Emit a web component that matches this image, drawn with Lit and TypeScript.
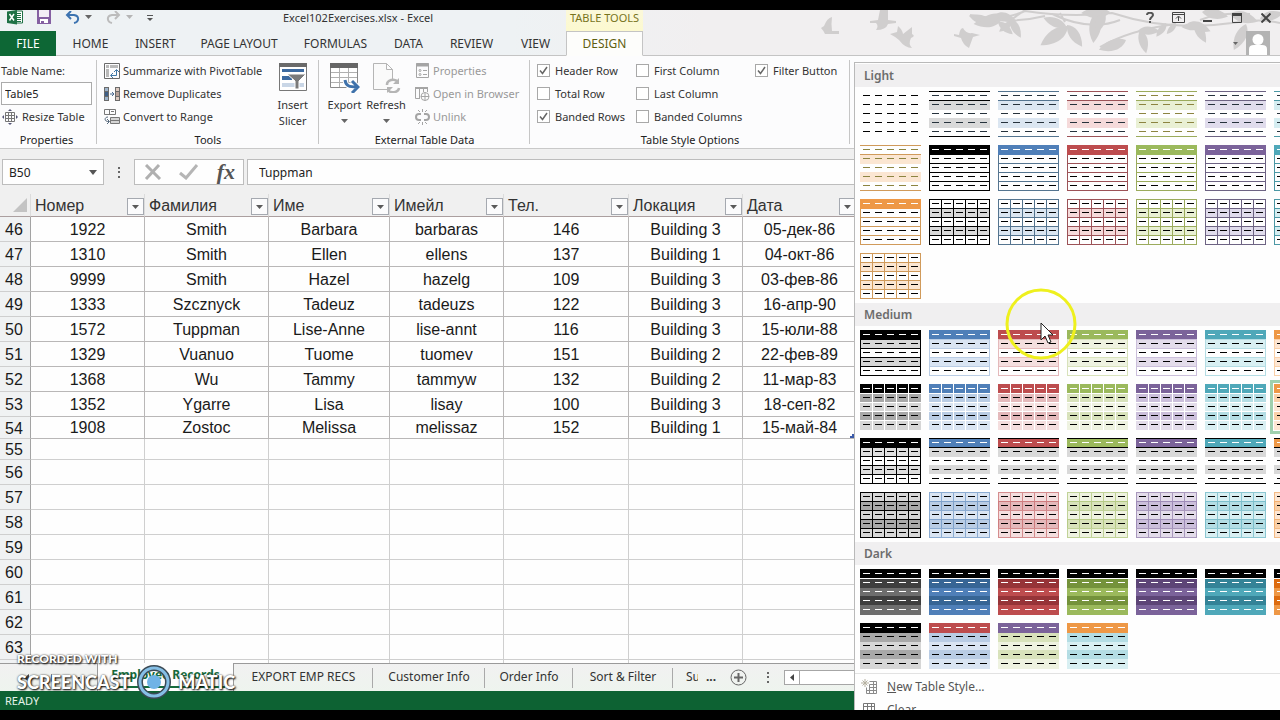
import { LitElement, html, svg, css, nothing } from "lit";
import { customElement, property } from "lit/decorators.js";
import { classMap } from "lit/directives/class-map.js";

type Kind = "none" | "lines" | "boxed" | "grid" | "banded" | "cells" | "ruled" | "tinted" | "dark" | "duo";

interface Tone {
  name: string;
  base: string;
  line: string;
  soft: string;
  tint: string;
  mid: string;
  deep: string;
}

interface Look {
  kind: Kind;
  tone: Tone;
  head?: string;
  selected?: boolean;
}

const TONES: Tone[] = [
  { name: "Black", base: "#000000", line: "#000000", soft: "#d9d9d9", tint: "#d6d6d6", mid: "#a8a8a8", deep: "#3f3f3f" },
  { name: "Blue", base: "#4f7fb8", line: "#54748f", soft: "#dbe6f1", tint: "#d9e4f2", mid: "#b9cce4", deep: "#376595" },
  { name: "Red", base: "#bd4c4e", line: "#9c5257", soft: "#f5dada", tint: "#f4dede", mid: "#e4b9bb", deep: "#963438" },
  { name: "Green", base: "#9bb95c", line: "#9bab5c", soft: "#e9f0d4", tint: "#eef2e0", mid: "#d8e2bb", deep: "#74923b" },
  { name: "Purple", base: "#7b639a", line: "#6d6383", soft: "#e0dcec", tint: "#e3dcea", mid: "#cbbfdb", deep: "#5d4577" },
  { name: "Teal", base: "#4fa8b9", line: "#4c98a5", soft: "#d5edf1", tint: "#d8eff2", mid: "#b4dde4", deep: "#348397" },
  { name: "Orange", base: "#ee9846", line: "#d09a5a", soft: "#fbe6d2", tint: "#fde6d3", mid: "#fad0a8", deep: "#dd6c10" },
];

const run = (kind: Kind): Look[] => TONES.map((tone) => ({ kind, tone }));

const SECTIONS: { title: string; looks: Look[] }[] = [
  {
    title: "Light",
    looks: [{ kind: "none", tone: TONES[0] }, ...run("lines"), ...run("boxed"), ...run("grid")],
  },
  {
    title: "Medium",
    looks: [
      ...run("banded"),
      ...run("cells").map((l, i) => ({ ...l, selected: i === 6 })),
      ...run("ruled"),
      ...run("tinted"),
    ],
  },
  {
    title: "Dark",
    looks: [
      ...run("dark"),
      { kind: "duo", tone: TONES[0], head: "#000000" },
      { kind: "duo", tone: TONES[1], head: TONES[2].base },
      { kind: "duo", tone: TONES[3], head: TONES[4].base },
      { kind: "duo", tone: TONES[5], head: TONES[6].base },
    ],
  },
];

const bar = (y: number, h: number, fill: string) => svg`<rect x="0" y=${y} width="61" height=${h} fill=${fill}></rect>`;
const post = (x: number, y: number, h: number, fill: string) =>
  svg`<rect x=${x} y=${y} width="1" height=${h} fill=${fill}></rect>`;
const ROWS = [0, 9, 18, 27, 36, 45];
const COLS = [0, 12, 24, 36, 48, 60];

function paint(look: Look) {
  const { kind, tone } = look;
  const black = tone.name === "Black";
  switch (kind) {
    case "none":
      return nothing;
    case "lines":
      return [bar(10, 9, tone.soft), bar(27, 10, tone.soft), bar(0, 1, tone.line), bar(9, 1, tone.line), bar(45, 1, tone.line)];
    case "boxed":
      return [
        ...ROWS.slice(1).map((y) => bar(y, 1, tone.line)),
        post(0, 0, 46, tone.line),
        post(60, 0, 46, tone.line),
        bar(0, 10, tone.base),
      ];
    case "grid":
      return [
        bar(9, 9, tone.soft),
        bar(27, 9, tone.soft),
        ...ROWS.map((y) => bar(y, 1, tone.line)),
        ...COLS.map((x) => post(x, 0, 46, tone.line)),
      ];
    case "banded": {
      const edge = black ? "#000000" : tone.mid;
      return [
        bar(9, 9, tone.tint),
        bar(27, 9, tone.tint),
        ...ROWS.map((y) => bar(y, 1, edge)),
        post(0, 0, 46, edge),
        post(60, 0, 46, edge),
        bar(0, 9, tone.base),
      ];
    }
    case "cells":
      return [
        bar(0, 9, tone.base),
        bar(9, 9, tone.mid),
        bar(18, 9, tone.tint),
        bar(27, 9, tone.mid),
        bar(36, 10, tone.tint),
        ...ROWS.slice(1, 5).map((y) => bar(y, 1, "#ffffff")),
        ...COLS.slice(1, 5).map((x) => post(x, 0, 46, "#ffffff")),
      ];
    case "ruled":
      return black
        ? [
            bar(9, 9, "#dedede"),
            bar(27, 9, "#dedede"),
            ...ROWS.map((y) => bar(y, 1, "#000000")),
            ...COLS.map((x) => post(x, 0, 46, "#000000")),
            bar(0, 10, "#000000"),
          ]
        : [
            bar(0, 9, tone.base),
            bar(10, 9, "#d9d9d9"),
            bar(27, 9, "#d9d9d9"),
            bar(0, 1, "#000000"),
            bar(9, 1, "#000000"),
            bar(45, 1, "#000000"),
          ];
    case "tinted": {
      const edge = black ? "#000000" : tone.base;
      const alpha = black ? 1 : 0.55;
      return [
        bar(0, 46, tone.tint),
        bar(9, 9, tone.mid),
        bar(27, 9, tone.mid),
        svg`<g opacity=${alpha}>${ROWS.map((y) => bar(y, 1, edge))}${COLS.map((x) => post(x, 0, 46, edge))}</g>`,
      ];
    }
    case "dark": {
      const light = black ? "#6e6e6e" : tone.base;
      return [bar(0, 9, "#000000"), bar(10, 9, tone.deep), bar(19, 8, light), bar(27, 9, tone.deep), bar(36, 10, light)];
    }
    case "duo":
      return [bar(0, 10, look.head!), bar(10, 9, tone.mid), bar(19, 8, tone.tint), bar(27, 9, tone.mid), bar(36, 10, tone.tint)];
  }
}

function swatch(look: Look) {
  const filledHead = ["boxed", "banded", "cells", "ruled", "dark", "duo"].includes(look.kind);
  const tinted = look.kind === "lines" && ["Green", "Orange"].includes(look.tone.name);
  const ink = tinted ? "#8c8440" : look.kind === "lines" ? "#26323c" : "#000000";
  return svg`${paint(look)}${[0, 1, 2, 3, 4].map((r) => {
    const color = look.kind === "dark" || (r === 0 && filledHead) ? "#ffffff" : ink;
    return svg`<path d="M3 ${r * 9 + 4.5}h7m5 0h7m5 0h7m5 0h7m5 0h7" stroke=${color} fill="none"></path>`;
  })}`;
}

@customElement("style-gallery")
export class StyleGallery extends LitElement {
  static styles = css`
    :host {
      display: block;
      box-sizing: border-box;
      padding-top: 1px;
      border: 1px solid #b9b9b9;
      border-right: 0;
      background: #fefefe;
      overflow: hidden;
      color: #555;
    }
    .title {
      margin: 0;
      padding-left: 9px;
      font-size: 12px;
      line-height: 23px;
      font-weight: 600;
      color: #6c6c6c;
      background: #f0eff0;
    }
    .looks {
      display: grid;
      grid-template-columns: repeat(7, 61px);
      gap: 8px;
      padding: 4px 5px;
    }
    button {
      font: inherit;
      color: inherit;
      border: 0;
      padding: 0;
      background: none;
    }
    .look {
      height: 46px;
    }
    .look svg {
      display: block;
    }
    .selected {
      outline: 3px solid #9fd0ae;
      outline-offset: 1px;
    }
    .actions {
      border-top: 1px solid #e2e2e2;
      padding-top: 1px;
    }
    .action {
      display: flex;
      align-items: center;
      gap: 10px;
      width: 100%;
      height: 23px;
      padding-left: 6px;
      font-size: 12px;
    }
  `;

  render() {
    return html`
      ${SECTIONS.map(
        (s) => html`
          <h2 class="title">${s.title}</h2>
          <div class="looks">
            ${s.looks.map(
              (l) => html`<button class=${classMap({ look: true, selected: !!l.selected })} aria-label="${s.title} ${l.tone.name}">
                <svg width="61" height="46" shape-rendering="crispEdges">${swatch(l)}</svg>
              </button>`
            )}
          </div>
        `
      )}
      <div class="actions">
        <button class="action">
          <svg width="16" height="16" fill="none" stroke="#8a8a8a">
            <path d="M5.500 8.500v6h10v-12h-7M5.500 11.500h10M8.500 5.500v9M12.500 2.500v12M8.500 5.500h7M8.500 8.500h7" />
            <path d="M4 0v8M0 4h8M1.500 1.500l5 5M6.500 1.500l-5 5" stroke="#b5b0a0" />
          </svg>
          <span><u>N</u>ew Table Style...</span>
        </button>
        <button class="action">
          <svg width="16" height="16" fill="none" stroke="#777">
            <path d="M2.500 1.500h11v11h-11zM2.500 4.500h11M2.500 8.500h11M6.500 1.500v11M10.500 1.500v11" />
          </svg>
          <span><u>C</u>lear</span>
        </button>
      </div>
    `;
  }
}

const HEADINGS = ["Номер", "Фамилия", "Име", "Имейл", "Тел.", "Локация", "Дата"];
const RECORDS = [
  ["1922", "Smith", "Barbara", "barbaras", "146", "Building 3", "05-дек-86"],
  ["1310", "Smith", "Ellen", "ellens", "137", "Building 1", "04-окт-86"],
  ["9999", "Smith", "Hazel", "hazelg", "109", "Building 3", "03-фев-86"],
  ["1333", "Szcznyck", "Tadeuz", "tadeuzs", "122", "Building 3", "16-апр-90"],
  ["1572", "Tuppman", "Lise-Anne", "lise-annt", "116", "Building 3", "15-юли-88"],
  ["1329", "Vuanuo", "Tuome", "tuomev", "151", "Building 2", "22-фев-89"],
  ["1368", "Wu", "Tammy", "tammyw", "132", "Building 2", "11-мар-83"],
  ["1352", "Ygarre", "Lisa", "lisay", "100", "Building 3", "18-сеп-82"],
  ["1908", "Zostoc", "Melissa", "melissaz", "152", "Building 1", "15-май-84"],
];
const FIRST_ROW = 46;
const BLANK_ROWS = [55, 56, 57, 58, 59, 60, 61, 62, 63];

@customElement("sheet-grid")
export class SheetGrid extends LitElement {
  static styles = css`
    :host {
      display: block;
      overflow: hidden;
      background: #fefefe;
      font-family: "Liberation Sans", Arial, sans-serif;
      font-size: 16px;
      color: #1a1a1a;
    }
    table {
      width: 100%;
      table-layout: fixed;
      border-collapse: separate;
      border-spacing: 0;
    }
    .numbers {
      width: 31px;
    }
    .w114 {
      width: 114px;
    }
    .w121 {
      width: 121px;
    }
    .w124 {
      width: 124px;
    }
    .w125 {
      width: 125px;
    }
    th,
    td {
      box-sizing: border-box;
      height: 25px;
      padding: 0;
      line-height: 18px;
      font-weight: 400;
      text-align: center;
      white-space: nowrap;
      border-right: 1px solid #cfcfcf;
      border-bottom: 1px solid #cfcfcf;
    }
    .record td {
      padding-top: 1px;
      border-color: #b9b7b7;
    }
    .short th,
    .short td {
      height: 22px;
    }
    .shorter th,
    .shorter td {
      height: 21px;
    }
    tbody th {
      padding: 2px 2px 0 0;
      background: #f0f2f3;
      border-right-color: #a3a3a3;
    }
    thead th {
      height: 23px;
      background: #f0f0f0;
      border-right-color: #dcdcdc;
      border-bottom-color: #ab9f9f;
    }
    .heading {
      display: flex;
      align-items: center;
      justify-content: space-between;
      box-sizing: border-box;
      padding: 2px 0 0 4px;
      height: 22px;
      color: #333;
    }
    .corner {
      display: block;
      margin: 0 0 0 13px;
    }
    .filter {
      display: grid;
      place-items: center;
      box-sizing: border-box;
      width: 17px;
      height: 17px;
      margin-top: 1px;
      padding: 0;
      border: 1px solid #a5a9b0;
      background: #fbfbfc;
    }
  `;

  render() {
    return html`
      <table>
        <colgroup>
          <col class="numbers" />
          <col class="w114" />
          <col class="w124" />
          <col class="w121" />
          <col class="w114" />
          <col class="w125" />
          <col class="w114" />
          <col class="w114" />
          <col />
        </colgroup>
        <thead>
          <tr>
            <th>
              <svg class="corner" width="14" height="14"><path d="M14 0v14H0z" fill="#c3c3c3" /></svg>
            </th>
            ${HEADINGS.map(
              (h) => html`<th scope="col">
                <div class="heading">
                  <span>${h}</span>
                  <button class="filter" aria-label="Filter ${h}">
                    <svg width="7" height="4"><path d="M0 0h7L3.500 4z" fill="#5a5a5a" /></svg>
                  </button>
                </div>
              </th>`
            )}
            <th></th>
          </tr>
        </thead>
        <tbody>
          ${RECORDS.map(
            (r, i) => html`<tr class=${classMap({ record: true, short: i === RECORDS.length - 1 })}>
              <th scope="row">${FIRST_ROW + i}</th>
              ${r.map((c) => html`<td>${c}</td>`)}
              <td></td>
            </tr>`
          )}
          ${BLANK_ROWS.map(
            (n, i) => html`<tr class=${classMap({ shorter: i === 0 })}>
              <th scope="row">${n}</th>
              ${[...HEADINGS, ""].map(() => html`<td></td>`)}
            </tr>`
          )}
          <tr>
            <th></th>
            ${[...HEADINGS, ""].map(() => html`<td></td>`)}
          </tr>
        </tbody>
      </table>
    `;
  }
}

@customElement("ribbon-check")
export class RibbonCheck extends LitElement {
  @property() label = "";
  @property({ type: Boolean }) on = false;

  static styles = css`
    label {
      display: flex;
      align-items: center;
      gap: 5px;
      height: 23px;
      white-space: nowrap;
    }
    input {
      appearance: none;
      flex: none;
      width: 13px;
      height: 13px;
      margin: 0;
      border: 1px solid #a8a8a8;
      background: #fff;
    }
    input:checked {
      background: #fff
        url("data:image/svg+xml,%3Csvg xmlns='http://www.w3.org/2000/svg' width='11' height='11'%3E%3Cpath d='M2 5.500l2.500 3L9 2' fill='none' stroke='%23666' stroke-width='1.500'/%3E%3C/svg%3E")
        center no-repeat;
    }
  `;

  render() {
    return html`<label><input type="checkbox" .checked=${this.on} />${this.label}</label>`;
  }
}

const caret = html`<svg width="7" height="4"><path d="M0 0h7L3.500 4z" fill="#666" /></svg>`;
const paleCaret = html`<svg width="7" height="4"><path d="M0 0h7L3.500 4z" fill="#b5b5b5" /></svg>`;

@customElement("app-root")
export class AppRoot extends LitElement {
  static styles = css`
    :host {
      display: flex;
      flex-direction: column;
      box-sizing: border-box;
      height: 100vh;
      padding: 10px 0;
      background: #000;
      font-family: "Noto Sans", "Open Sans", sans-serif;
      font-size: 11px;
      color: #333;
    }
    .window {
      position: relative;
      flex: 1;
      min-height: 0;
      display: flex;
      flex-direction: column;
      overflow: hidden;
      background: #f0f0f0;
    }
    button {
      font: inherit;
      color: inherit;
      border: 0;
      padding: 0;
      background: none;
      white-space: nowrap;
    }
    svg {
      display: block;
      flex: none;
    }
    .top {
      position: relative;
      background: linear-gradient(90deg, #eef2f4 40%, #f1eff0 55%);
    }
    .foliage {
      position: absolute;
      top: 0;
      right: 0;
    }
    .titlebar {
      position: relative;
      display: grid;
      grid-template-columns: 150px 416px 77px 1fr;
      height: 21px;
      line-height: 16px;
    }
    .quick {
      display: flex;
      align-items: flex-start;
      gap: 14px;
      padding-left: 7px;
    }
    .quick button {
      display: flex;
      align-items: center;
      gap: 5px;
      height: 14px;
    }
    .doc {
      text-align: center;
    }
    .context {
      text-align: center;
      color: #77731c;
      background: linear-gradient(#fbf8da, #fcf9cf);
    }
    .controls {
      display: grid;
      grid-template-columns: repeat(5, 29px);
      justify-content: end;
      place-items: center;
      height: 15px;
    }
    .tabs {
      position: relative;
      display: flex;
      align-items: stretch;
      height: 25px;
    }
    .tabrow {
      display: grid;
      grid-template-columns: 56px 69px 61px 106px 87px 59px 67px 61px 77px;
      font-size: 12px;
    }
    .tabs::after {
      content: "";
      flex: 1;
      order: 1;
      border-bottom: 1px solid #c4c4c4;
    }
    .tab {
      box-sizing: border-box;
      border-bottom: 1px solid #c4c4c4;
    }
    .file {
      color: #fff;
      background: #0d6735;
      border-bottom-color: #0d6735;
    }
    .current {
      color: #5f6010;
      background: #fdfdfb;
      border: 1px solid #c4c4c4;
      border-bottom-color: #fdfdfb;
    }
    .account {
      order: 2;
      display: flex;
      align-items: center;
      gap: 8px;
      padding-right: 10px;
      border-bottom: 1px solid #c4c4c4;
    }
    .ribbon {
      display: flex;
      box-sizing: border-box;
      padding-top: 3px;
      background: #fcfcfd;
      border-bottom: 1px solid #c9c9c9;
    }
    .group {
      display: flex;
      flex-direction: column;
      box-sizing: border-box;
      background: linear-gradient(#c6c6c6, #c6c6c6) right 0 top 1px / 1px 84px no-repeat;
    }
    .body {
      display: flex;
      height: 69px;
    }
    .caption {
      height: 20px;
      line-height: 24px;
      text-align: center;
      color: #222;
    }
    .g-props {
      width: 97px;
      padding-right: 4px;
    }
    .g-tools {
      width: 222px;
    }
    .g-data {
      width: 211px;
    }
    .g-options {
      width: 320px;
    }
    .props {
      display: grid;
      grid-template-rows: repeat(3, 23px);
      align-items: center;
      padding-left: 1px;
    }
    .props input {
      box-sizing: border-box;
      width: 91px;
      height: 23px;
      padding: 0 3px;
      border: 1px solid #ababab;
      background: #fff;
      font: inherit;
      color: #222;
    }
    .stack {
      display: flex;
      flex-direction: column;
    }
    .line {
      display: flex;
      align-items: center;
      gap: 3px;
      height: 23px;
    }
    .off {
      color: #999;
    }
    .g-tools .body {
      justify-content: space-between;
      padding: 0 11px 0 7px;
    }
    .g-data .body {
      padding-left: 7px;
    }
    .g-data .stack {
      padding-left: 6px;
    }
    .big {
      display: flex;
      flex-direction: column;
      align-items: center;
      padding-top: 4px;
      line-height: 16px;
    }
    .big svg {
      margin-bottom: 4px;
    }
    .big span svg {
      margin: 6px 0 0;
    }
    .wide {
      width: 37px;
    }
    .wider {
      width: 46px;
    }
    .checks {
      display: grid;
      grid-template-columns: 99px 119px auto;
      grid-template-rows: repeat(3, 23px);
      padding-left: 7px;
    }
    .formula {
      display: flex;
      align-items: center;
      padding: 10px 0 9px 2px;
    }
    .box {
      display: flex;
      align-items: center;
      box-sizing: border-box;
      height: 26px;
      border: 1px solid #bdbdbd;
      background: #fefefe;
    }
    .box input {
      min-width: 0;
      flex: 1;
      border: 0;
      padding: 0;
      background: none;
      font: inherit;
      font-size: 12px;
      color: #222;
    }
    .name {
      width: 102px;
      padding: 0 6px;
    }
    .grip {
      width: 30px;
      display: grid;
      place-items: center;
    }
    .edit {
      width: 110px;
      margin-right: 3px;
      justify-content: space-between;
      padding: 0 8px 0 9px;
    }
    .fx {
      font-family: "Liberation Serif", serif;
      font-style: italic;
      font-weight: 700;
      font-size: 22px;
      line-height: 22px;
      color: #555;
    }
    .content {
      flex: 1;
      padding-left: 11px;
    }
    sheet-grid {
      flex: 1;
      min-height: 0;
    }
    .sheets {
      display: flex;
      align-items: stretch;
      box-sizing: border-box;
      height: 28px;
      border-top: 1px solid #9a9a9a;
      background: linear-gradient(#f1f1f1, #eef4ee);
      font-size: 12px;
    }
    .nav {
      display: flex;
      align-items: center;
      gap: 22px;
      box-sizing: border-box;
      width: 98px;
      padding-left: 24px;
      border-right: 1px solid #9a9a9a;
    }
    .sheet {
      box-sizing: border-box;
      padding-bottom: 2px;
      background: linear-gradient(#a9a9a9, #a9a9a9) right 0 top 4px / 1px 20px no-repeat;
    }
    .open {
      width: 136px;
      margin-top: -1px;
      background: #fdfdfd;
      border-right: 1px solid #9a9a9a;
      color: #156b3b;
      font-weight: 700;
    }
    .open span {
      display: block;
      margin: 0 8px;
      line-height: 22px;
      border-bottom: 2px solid #156b3b;
    }
    .s139 {
      width: 139px;
    }
    .s112 {
      width: 112px;
    }
    .s88 {
      width: 88px;
    }
    .s100 {
      width: 100px;
    }
    .cut {
      width: 12px;
      margin-left: 13px;
      padding-bottom: 2px;
      overflow: hidden;
      text-align: left;
    }
    .dots {
      margin: 0 14px 0 8px;
      padding-bottom: 2px;
      font-weight: 700;
    }
    .sheets > svg {
      align-self: center;
    }
    .grip2 {
      margin: 0 15px 0 20px;
    }
    .scroll {
      flex: 1;
      display: flex;
      align-self: center;
      align-items: center;
      box-sizing: border-box;
      height: 15px;
      border: 1px solid #a6a6a6;
      background: #fff;
    }
    .scroll button {
      display: grid;
      place-items: center;
      width: 15px;
      height: 13px;
      border-right: 1px solid #a6a6a6;
    }
    .status {
      height: 19px;
      padding-left: 5px;
      line-height: 20px;
      color: #e6f2ea;
      background: #0d6233;
    }
    style-gallery {
      position: absolute;
      top: 52px;
      right: 0;
      bottom: -16px;
      width: 426px;
    }
    .pointer {
      position: absolute;
      top: 278px;
      right: 203px;
    }
    .mark {
      position: absolute;
      left: 17px;
      bottom: 10px;
      font-family: Lato, "Open Sans", sans-serif;
      font-weight: 900;
      color: #fff;
      text-shadow: 1px 1px 2px #000, 0 0 2px #444;
      white-space: nowrap;
    }
    .with {
      font-size: 12px;
      line-height: 10px;
    }
    .brand {
      display: flex;
      align-items: center;
      gap: 7px;
      font-size: 18px;
      line-height: 36px;
    }
    .handle {
      position: absolute;
      left: 850px;
      top: 424px;
    }
  `;

  private leaf(x: number, y: number, angle: number, size: number) {
    return svg`<path transform="translate(${x} ${y}) rotate(${angle}) scale(${size})" d="M0 0C5 -6 14 -7 24 0C15 6 6 5 0 0z"></path>`;
  }

  private foliage() {
    return html`<svg class="foliage" width="460" height="45" fill="#d0cece">
      <path d="M12 7Q7 8 4 16L1 18Q3 20 5 24H19V21H12Q11 14 12 7z" />
      <path d="M60 0H68V10L76 11V13L68 14Q66 20 56 20Q59 16 56 13H50V11L58 10z" />
      <path d="M78 16Q82 19 83 24L92 17V24Q96 26 91 28Q88 34 92 38Q85 38 79 30Q74 26 70 24L77 22z" />
      <path d="M143 18Q140 18 139 25L134 24V26L141 28Q143 35 149 38L153 27L160 25L152 23Q146 24 143 18z" />
      <path
        d="M150 5Q180 12 205 1Q250 8 292 3Q350 22 412 13Q440 8 460 13M178 10Q200 12 225 6M232 4Q270 22 300 10M355 14Q310 20 280 37M380 10Q400 2 430 4M205 0L188 12M240 3L245 12"
        fill="none"
        stroke="#d0cece"
        stroke-width="2"
      />
      ${this.leaf(172, 12, 195, 1)} ${this.leaf(182, 9, 170, 1.2)} ${this.leaf(180, 4, 155, 1)}
      ${this.leaf(192, 11, 140, 0.7)} ${this.leaf(176, 4, 20, 0.9)} ${this.leaf(178, 12, 40, 0.8)} ${this.leaf(190, 9, 60, 0.9)}
      ${this.leaf(248, 16, 145, 1.4)} ${this.leaf(246, 16, 200, 1)} ${this.leaf(247, 15, 55, 1.1)}
      ${this.leaf(276, 2, 95, 1.3)} ${this.leaf(290, 2, 178, 1.2)} ${this.leaf(284, 1, 110, 1)}
      ${this.leaf(306, 30, 160, 1.2)} ${this.leaf(320, 20, 75, 1)} ${this.leaf(318, 21, 0, 0.9)}
      ${this.leaf(356, 13, 130, 0.6)} ${this.leaf(383, 15, 175, 0.9)} ${this.leaf(374, 12, 60, 1)}
      ${this.leaf(368, 13, 20, 1)} ${this.leaf(382, 2, 10, 1.1)} ${this.leaf(346, 13, 125, 0.7)} ${this.leaf(426, 14, 115, 1.2)}
      ${this.leaf(410, 4, 15, 1.2)} ${this.leaf(440, 9, -15, 1)}
    </svg>`;
  }

  render() {
    return html`
      <div class="window">
        <header class="top">
          ${this.foliage()}
          <div class="titlebar">
            <div class="quick">
              <svg width="16" height="15">
                <path d="M8 1h7.500v12H8z" fill="#fff" stroke="#1e7145" />
                <path d="M9 3.500h5M9 5.500h5M9 7.500h5M9 9.500h5M9 11.500h5" stroke="#1e7145" />
                <path d="M0 1.500L10 0v14.500L0 13z" fill="#1e7145" />
                <path d="M2.500 4l4.500 6.500M7 4l-4.500 6.500" stroke="#fff" stroke-width="1.500" />
              </svg>
              <button aria-label="Save">
                <svg width="14" height="14">
                  <path d="M0 0h14v14H0z" fill="#8560a2" />
                  <path d="M2 0h10v7H2z" fill="#f3eef6" />
                  <path d="M3 9h8v4H3z" fill="#fff" />
                  <path d="M4 11h3v3H4z" fill="#8560a2" />
                </svg>
              </button>
              <button aria-label="Undo">
                <svg width="15" height="13" fill="none" stroke="#3c73b0" stroke-width="2">
                  <path d="M6 0L2 4l4 4M2 4h7c6 1 5 7 0 8" />
                </svg>
                ${caret}
              </button>
              <button aria-label="Redo">
                <svg width="15" height="13" fill="none" stroke="#bcbcbc" stroke-width="2">
                  <path d="M9 0l4 4-4 4M13 4H6c-6 1-5 7 0 8" />
                </svg>
                ${paleCaret}
              </button>
              <button aria-label="Customize Quick Access Toolbar">
                <svg width="6" height="12"><path d="M0 4.500h6" stroke="#555" /><path d="M0 7h6l-3 3z" fill="#555" /></svg>
              </button>
            </div>
            <div class="doc">Excel102Exercises.xlsx - Excel</div>
            <div class="context">TABLE TOOLS</div>
            <div class="controls">
              <button aria-label="Help">
                <svg width="8" height="11" fill="none" stroke="#555" stroke-width="2"><path d="M1 3c0-3 6-3 6 0 0 2-3 2-3 5M4 9v2" /></svg>
              </button>
              <button aria-label="Ribbon Display Options">
                <svg width="13" height="11" fill="none" stroke="#444">
                  <path d="M.5.5h12v10H.5zM.5 2.500h12M6.500 9V4.500M4 6.500L6.500 4 9 6.500" />
                </svg>
              </button>
              <button aria-label="Minimize"><svg width="9" height="11"><path d="M0 9h9" stroke="#444" stroke-width="2" /></svg></button>
              <button aria-label="Restore">
                <svg width="10" height="10" fill="none" stroke="#444"><path d="M.5 1.500h9v8h-9z" /><path d="M0 1.500h10" stroke-width="3" /></svg>
              </button>
              <button aria-label="Close">
                <svg width="10" height="10" fill="none" stroke="#444" stroke-width="2"><path d="M.5.5l9 9M9.500.5l-9 9" /></svg>
              </button>
            </div>
          </div>
          <nav class="tabs">
            <div class="tabrow">
              <button class="tab file">FILE</button>
              ${["HOME", "INSERT", "PAGE LAYOUT", "FORMULAS", "DATA", "REVIEW", "VIEW"].map(
                (t) => html`<button class="tab">${t}</button>`
              )}
              <button class="tab current">DESIGN</button>
            </div>
            <div class="account">
              <svg width="5" height="3"><path d="M0 0h5L2.500 3z" fill="#666" /></svg>
              <svg width="24" height="24">
                <path d="M0 0h24v24H0z" fill="#b3b3b3" />
                <circle cx="12" cy="8.500" r="5.500" fill="#fff" />
                <path d="M3 24v-6q0-4 5-4h8q5 0 5 4v6z" fill="#fff" />
              </svg>
            </div>
          </nav>
        </header>

        <section class="ribbon">
          <div class="group g-props">
            <div class="body">
              <div class="props">
                <label for="table-name">Table Name:</label>
                <input id="table-name" value="Table5" />
                <button class="line">
                  <svg width="18" height="16" fill="none" stroke="#777">
                    <path d="M4.500 3.500h9v9h-9zM4.500 6.500h9M4.500 9.500h9M7.500 3.500v9M10.500 3.500v9" />
                    <path d="M9 0l2 2H7zM9 16l2-2H7zM1 8l2-2v4zM17 8l-2-2v4z" fill="#557" stroke="none" />
                  </svg>
                  Resize Table
                </button>
              </div>
            </div>
            <div class="caption">Properties</div>
          </div>

          <div class="group g-tools">
            <div class="body">
              <div class="stack">
                <button class="line">
                  <svg width="16" height="16" fill="none" stroke="#6a6a6a">
                    <path d="M.5.5h15v15H.5z" />
                    <path d="M2 2h3v3H2zM6 2h8v3H6zM2 6h3v8H2z" fill="#b9b9b9" stroke="none" />
                    <path d="M7 12.500h5.500V7M9 10l-2.500 2.500L9 15M10 9l2.500-2.500L15 9" stroke="#3f78a8" />
                  </svg>
                  Summarize with PivotTable
                </button>
                <button class="line">
                  <svg width="16" height="16">
                    <path d="M0 1h5v14H0z" fill="#6b6b6b" /><path d="M1 2h3v3H1zM1 11h3v3H1z" fill="#9fb5cc" /><path d="M1 6h3v4H1z" fill="#3f5f86" />
                    <path d="M11 1h5v14h-5z" fill="#6b6b6b" /><path d="M12 2h3v3h-3zM12 11h3v3h-3z" fill="#dcc9c0" /><path d="M12 6h3v4h-3z" fill="#b7a098" />
                    <path d="M6 8h4M8 6l2 2-2 2" stroke="#4a6a90" fill="none" />
                  </svg>
                  Remove Duplicates
                </button>
                <button class="line">
                  <svg width="16" height="16" fill="none" stroke="#777">
                    <path d="M.5.5h11v5H.5zM5.500.5v5M7 2.500h3" />
                    <path d="M6.500 8.500h9v6h-9zM6.500 11.500h9" fill="#d5d5d5" />
                    <path d="M4 8C0 8 0 13 5 12.500M3 10l2.500 2.500L3 15" stroke="#55677a" />
                  </svg>
                  Convert to Range
                </button>
              </div>
              <button class="big">
                <svg width="28" height="30">
                  <path d="M.5.5h27v27H.5z" fill="#fff" stroke="#777" /><path d="M0 0h28v4H0z" fill="#6a6a6a" />
                  <path d="M3 6h22v3H3zM3 13h10v4H3z" fill="#3c6aa0" /><path d="M3 20h22v4H3z" fill="#c9d6e6" />
                  <path d="M8 11h19l-7 7v8h-4v-8z" fill="#7a7a7a" stroke="#fff" />
                </svg>
                <span>Insert<br />Slicer</span>
              </button>
            </div>
            <div class="caption">Tools</div>
          </div>

          <div class="group g-data">
            <div class="body">
              <button class="big wide">
                <svg width="30" height="30">
                  <path d="M.5.5h27v24H.5z" fill="#fff" stroke="#8a8a8a" /><path d="M0 0h28v5H0z" fill="#666" />
                  <path d="M1 9.500h26M1 14.500h26M1 19.500h26M9.500 5v19M18.500 5v19" stroke="#b0b0b0" />
                  <path d="M15 17c1 7 5 7 12 7M22 18l6 6-6 6" fill="none" stroke="#fff" stroke-width="5" />
                  <path d="M15 17c1 6 4 7 12 7M22 18l6 6-6 6" fill="none" stroke="#3f72ab" stroke-width="3" />
                </svg>
                Export<span>${caret}</span>
              </button>
              <button class="big wider">
                <svg width="30" height="30" fill="none" stroke="#b5b5b5">
                  <path d="M17 26.500H2.500V.5h13l6 6V16M15.500.5v6h6" fill="#fafafa" />
                  <path d="M16 22a6 5 0 0 1 11-3M28 25a6 5 0 0 1-11 2" stroke-width="2.500" />
                  <path d="M28 15v6h-6zM16 30v-6h6z" fill="#b5b5b5" stroke="none" />
                </svg>
                Refresh<span>${caret}</span>
              </button>
              <div class="stack off">
                <button class="line">
                  <svg width="15" height="16" fill="none" stroke="#a5a5a5">
                    <path d="M1.500.5h12v14h-12z" /><path d="M1 2h13" stroke-width="3" /><path d="M8 7.500h4M8 11.500h4" />
                    <circle cx="5" cy="7.500" r="1" /><circle cx="5" cy="11.500" r="1" />
                  </svg>
                  Properties
                </button>
                <button class="line">
                  <svg width="15" height="16" fill="none" stroke="#a5a5a5">
                    <path d="M5 12.500H.5V2.500h12V6M4.500 2v10M8.500 2v4" /><path d="M0 2h13" stroke-width="2" />
                    <circle cx="10" cy="10.500" r="4" /><path d="M6 10.500h8M10 6.500v8" />
                  </svg>
                  Open in Browser
                </button>
                <button class="line">
                  <svg width="15" height="16" fill="none" stroke="#a5a5a5">
                    <path d="M6 5H4a3 3 0 0 0 0 6h2M9 5h2a3 3 0 0 1 0 6H9" stroke-width="2" />
                    <path d="M7.500 0v3M3 1l2 2M12 1l-2 2M7.500 13v3M3 15l2-2M12 15l-2-2" />
                  </svg>
                  Unlink
                </button>
              </div>
            </div>
            <div class="caption">External Table Data</div>
          </div>

          <div class="group g-options">
            <div class="checks">
              <ribbon-check label="Header Row" on></ribbon-check>
              <ribbon-check label="First Column"></ribbon-check>
              <ribbon-check label="Filter Button" on></ribbon-check>
              <ribbon-check label="Total Row"></ribbon-check>
              <ribbon-check label="Last Column"></ribbon-check>
              <span></span>
              <ribbon-check label="Banded Rows" on></ribbon-check>
              <ribbon-check label="Banded Columns"></ribbon-check>
            </div>
            <div class="caption">Table Style Options</div>
          </div>
        </section>

        <div class="formula">
          <div class="box name">
            <input aria-label="Name Box" value="B50" />
            <svg width="8" height="5"><path d="M0 0h8L4 5z" fill="#555" /></svg>
          </div>
          <div class="grip">
            <svg width="2" height="11"><path d="M0 0h2v2H0zM0 4h2v2H0zM0 9h2v2H0z" fill="#666" /></svg>
          </div>
          <div class="box edit">
            <button aria-label="Cancel">
              <svg width="18" height="16" fill="none" stroke="#b0b0b0" stroke-width="3"><path d="M2 1l14 14M15 1L2 15" /></svg>
            </button>
            <button aria-label="Enter">
              <svg width="20" height="16" fill="none" stroke="#b5b5b5" stroke-width="3"><path d="M1 9l6 5L18 1" /></svg>
            </button>
            <button class="fx" aria-label="Insert Function">fx</button>
          </div>
          <div class="box content"><input aria-label="Formula Bar" value="Tuppman" /></div>
        </div>

        <sheet-grid></sheet-grid>

        <div class="sheets">
          <div class="nav">
            <svg width="5" height="8"><path d="M5 0v8L0 4z" fill="#444" /></svg>
            <svg width="5" height="8"><path d="M0 0v8l5-4z" fill="#444" /></svg>
            <svg width="10" height="2"><path d="M0 0h2v2H0zM4 0h2v2H4zM8 0h2v2H8z" fill="#444" /></svg>
          </div>
          <button class="sheet open"><span>Employee Records</span></button>
          <button class="sheet s139">EXPORT EMP RECS</button>
          <button class="sheet s112">Customer Info</button>
          <button class="sheet s88">Order Info</button>
          <button class="sheet s100">Sort &amp; Filter</button>
          <button class="cut">Su</button>
          <button class="dots">...</button>
          <svg width="17" height="17" fill="none" stroke="#666">
            <circle cx="8.500" cy="8.500" r="7.500" /><path d="M4 8.500h9M8.500 4v9" stroke-width="2" />
          </svg>
          <svg class="grip2" width="2" height="11"><path d="M0 0h2v2H0zM0 4h2v2H0zM0 9h2v2H0z" fill="#666" /></svg>
          <div class="scroll">
            <button aria-label="Scroll left"><svg width="4" height="7"><path d="M4 0v7L0 3.500z" fill="#444" /></svg></button>
          </div>
        </div>
        <footer class="status">READY</footer>

        <svg class="handle" width="5" height="4"><path d="M4 0v4H0V2h2V0z" fill="#3b5aa8" /></svg>
        <style-gallery></style-gallery>

        <svg class="pointer" width="72" height="72">
          <circle cx="36" cy="36" r="34" fill="none" stroke="#eef01e" stroke-width="3" />
          <path d="M36 35v17l4-4 3 7 3-1-3-7h5z" fill="#fff" stroke="#222" />
        </svg>

        <div class="mark">
          <div class="with">RECORDED WITH</div>
          <div class="brand">
            SCREENCAST
            <svg width="34" height="34">
              <circle cx="17" cy="17" r="14" fill="none" stroke="#3b4a55" stroke-width="6" />
              <circle cx="17" cy="17" r="14" fill="none" stroke="#85bfe6" stroke-width="3" />
              <circle cx="17" cy="17" r="7" fill="#6fb3e6" />
            </svg>
            MATIC
          </div>
        </div>
      </div>
    `;
  }
}
